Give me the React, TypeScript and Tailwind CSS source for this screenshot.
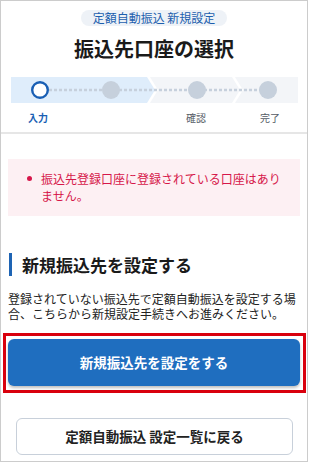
import React from "react";

const font = { fontFamily: '"Noto Sans CJK JP", "Noto Sans", sans-serif' };

function Stepper() {
  return (
    <svg width="287" height="26" viewBox="0 0 287 26" className="block">
      <polygon points="0,0 136,0 144,13 136,26 0,26" fill="#dfedfb" />
      <polygon points="139,0 221,0 229,13 221,26 139,26 147,13" fill="#f3f5f8" />
      <polygon points="224,0 287,0 287,26 224,26 232,13" fill="#f3f5f8" />
      <line x1="38" y1="13" x2="250" y2="13" stroke="#c6d0dc" strokeWidth="2.5" strokeDasharray="3 2" />
      <circle cx="29" cy="13" r="7.8" fill="#ffffff" stroke="#1a5fb4" strokeWidth="2.4" />
      <circle cx="100" cy="13" r="9" fill="#c6d0dc" />
      <circle cx="186" cy="13" r="9" fill="#c6d0dc" />
      <circle cx="257" cy="13" r="9" fill="#c6d0dc" />
    </svg>
  );
}

export default function App() {
  return (
    <div
      className="w-[308px] h-[462px] border border-[#cccccc] bg-white overflow-hidden"
      style={font}
    >
      <div className="flex flex-col pt-[9px] pb-[7px] border-b-2 border-[#e6e6e6]">
        <div className="flex justify-center">
          <span className="h-[16px] px-[12px] rounded-full bg-[#eef2f7] text-[12px] leading-[16px] text-[#1d5fae]">
            定額自動振込 新規設定
          </span>
        </div>
        <h1 className="mt-[9px] text-center text-[20px] leading-[28px] font-bold text-[#1a1a1a]">
          振込先口座の選択
        </h1>
        <div className="mt-[14px] ml-[10px]">
          <Stepper />
        </div>
        <div className="mt-[8px] flex text-[10px] leading-[14px]">
          <span className="ml-[17px] w-[40px] text-center font-bold text-[#1a5fb4]">入力</span>
          <span className="ml-[118px] w-[40px] text-center text-[#555c66]">確認</span>
          <span className="ml-[34px] w-[40px] text-center text-[#555c66]">完了</span>
        </div>
      </div>

      <div className="mt-[25px] ml-[7px] w-[292px] bg-[#fdf0f3] pt-[11px] pb-[12px] pl-[19px] pr-[10px] flex">
        <span className="mt-[6px] w-[5px] h-[5px] rounded-full bg-[#d6174a] shrink-0" />
        <p className="ml-[9px] text-[12px] leading-[17px] text-[#d6174a]">
          振込先登録口座に登録されている口座はありません。
        </p>
      </div>

      <div className="mt-[37px] ml-[8px] flex items-center">
        <span className="w-[3px] h-[23px] bg-[#1e64b4]" />
        <h2 className="ml-[10px] text-[17px] leading-[23px] font-bold text-[#1a1a1a]">
          新規振込先を設定する
        </h2>
      </div>

      <p className="mt-[15px] mx-[7px] text-[12px] leading-[15px] text-[#222222]">
        登録されていない振込先で定額自動振込を設定する場合、こちらから新規設定手続きへお進みください。
      </p>

      <div className="mt-[12px] ml-[2px] w-[303px] border-[3px] border-[#d9000d] pl-[2px] pr-[3px] pt-[3px] pb-[4px]">
        <button className="w-full h-[47px] rounded-[6px] bg-[#1f6ebf] shadow-[0_2px_3px_rgba(0,0,0,0.25)] text-white text-[13.5px] font-bold">
          新規振込先を設定をする
        </button>
      </div>

      <button className="mt-[25px] ml-[15px] w-[277px] h-[37px] rounded-[6px] border border-[#c8d0da] bg-white text-[#222222] text-[13.5px] font-bold block">
        定額自動振込 設定一覧に戻る
      </button>
    </div>
  );
}
